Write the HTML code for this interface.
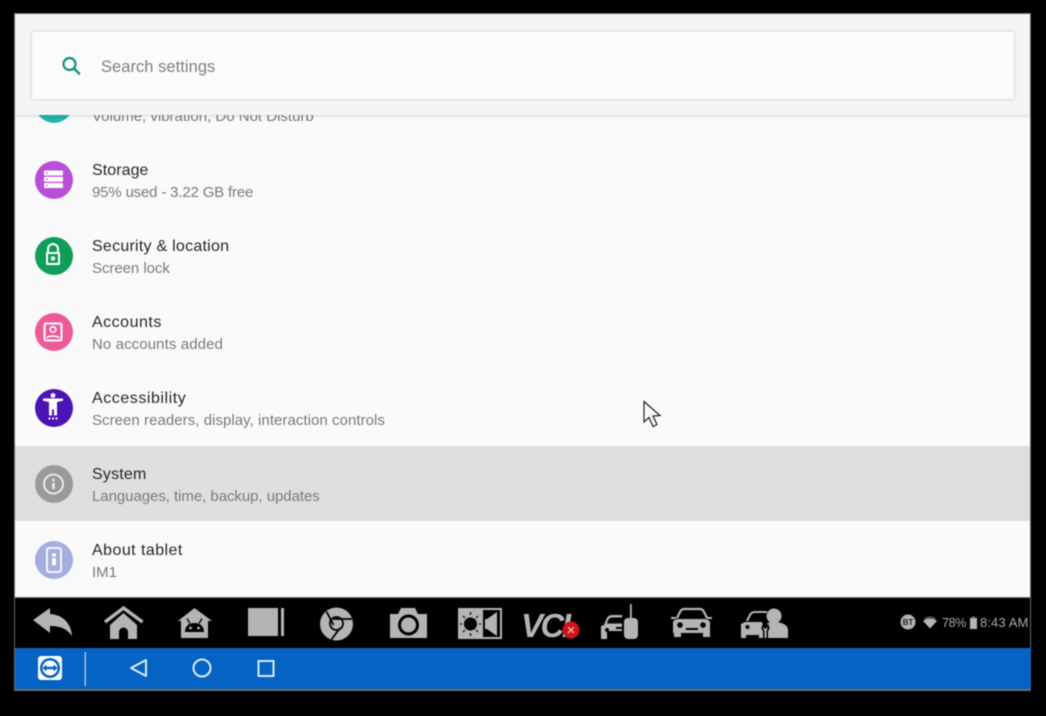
<!DOCTYPE html>
<html><head><meta charset="utf-8">
<style>
html,body{margin:0;padding:0;background:#000;width:1046px;height:716px;overflow:hidden;font-family:"Liberation Sans",sans-serif}
#w{position:absolute;left:0;top:0;width:1046px;height:716px;background:#000;overflow:hidden;filter:blur(.45px)}
.a{position:absolute}
.t{position:absolute;left:92px;font-size:16px;line-height:20px;color:#262626;white-space:nowrap}
.s{position:absolute;left:92px;font-size:15px;line-height:18px;color:#7a7a7a;white-space:nowrap}
</style></head>
<body><div id="w">
<div class="a" style="left:14px;top:13px;width:1017px;height:678px;background:#6a6a6a"></div>
<div class="a" style="left:15px;top:14px;width:1015px;height:584px;background:#fafafa"></div>
<div class="a" style="left:15px;top:446px;width:1015px;height:75px;background:#dfdfdf"></div>

<svg class="a" style="left:0;top:0" width="1046" height="716" viewBox="0 0 1046 716">
<circle cx="54" cy="104" r="19" fill="#1fb5ac"/>
<circle cx="54" cy="180" r="19" fill="#b94fd8"/>
<g fill="#fff"><rect x="44" y="170.500" width="19" height="5" rx="1"/><rect x="44" y="176.800" width="19" height="5" rx="1"/><rect x="44" y="183" width="19" height="5" rx="1"/></g>
<g fill="#b94fd8"><rect x="46" y="172.500" width="2" height="1"/><rect x="46" y="178.800" width="2" height="1"/><rect x="46" y="185" width="2" height="1"/></g>
<circle cx="54" cy="256" r="19" fill="#109d58"/>
<path d="M48 252v-3a5 5 0 0 1 10 0v3" fill="none" stroke="#fff" stroke-width="2"/>
<rect x="46" y="252" width="14" height="13" rx="1" fill="#fff"/><rect x="48" y="254" width="10" height="9" fill="#109d58"/><rect x="51" y="256.500" width="4" height="4" rx="1" fill="#fff"/>
<circle cx="54" cy="332" r="19" fill="#ee5a97"/>
<rect x="44.500" y="323.500" width="17" height="17" rx="1.500" fill="none" stroke="#fff" stroke-width="2"/>
<circle cx="53" cy="329.500" r="2.800" fill="none" stroke="#fff" stroke-width="1.600"/>
<path d="M46.500 338c2-2.500 11-2.500 13 0" fill="none" stroke="#fff" stroke-width="1.600"/>
<circle cx="54" cy="408" r="19" fill="#4a14b4"/>
<circle cx="53" cy="395.500" r="2.400" fill="#fff"/>
<path d="M43 398.500h20v2.200l-6 1.300v13.500h-3v-6h-2v6h-3v-13.500l-6-1.300z" fill="#fff"/>
<g fill="#fff"><circle cx="49.500" cy="418.500" r="1.100"/><circle cx="53" cy="418.500" r="1.100"/><circle cx="56.500" cy="418.500" r="1.100"/></g>
<circle cx="54" cy="484" r="19" fill="#9a9a9a"/>
<circle cx="53.500" cy="484" r="9.500" fill="none" stroke="#f2f2f2" stroke-width="1.800"/>
<rect x="52.300" y="483" width="2.400" height="6" fill="#f2f2f2"/><rect x="52.300" y="478.800" width="2.400" height="2.400" fill="#f2f2f2"/>
<circle cx="54" cy="560" r="19" fill="#a4addf"/>
<rect x="47" y="548" width="14" height="24" rx="2" fill="none" stroke="#fff" stroke-width="1.800"/>
<rect x="52" y="558" width="4" height="7.500" fill="#fff"/><rect x="52" y="553.500" width="4" height="3" fill="#fff"/>
</svg>

<div class="s" style="top:108px">Volume, vibration, Do Not Disturb</div>
<div class="t" style="top:161px;letter-spacing:.07px">Storage</div>
<div class="s" style="top:184px;letter-spacing:-.17px">95% used - 3.22 GB free</div>
<div class="t" style="top:237px;letter-spacing:.25px">Security &amp; location</div>
<div class="s" style="top:260px;letter-spacing:-.05px">Screen lock</div>
<div class="t" style="top:313px;letter-spacing:.5px">Accounts</div>
<div class="s" style="top:336px;letter-spacing:.1px">No accounts added</div>
<div class="t" style="top:389px;letter-spacing:.55px">Accessibility</div>
<div class="s" style="top:412px;letter-spacing:.05px">Screen readers, display, interaction controls</div>
<div class="t" style="top:465px;letter-spacing:.2px">System</div>
<div class="s" style="top:488px;letter-spacing:-.05px">Languages, time, backup, updates</div>
<div class="t" style="top:541px;letter-spacing:.45px">About tablet</div>
<div class="s" style="top:564px">IM1</div>

<div class="a" style="left:15px;top:14px;width:1015px;height:101px;background:#f5f5f5;box-shadow:0 1px 3px rgba(0,0,0,.15)"></div>
<div class="a" style="left:32px;top:32px;width:982px;height:67px;background:#fbfbfb;box-shadow:0 0 3px rgba(0,0,0,.22)"></div>
<svg class="a" style="left:58px;top:53px" width="28" height="28" viewBox="0 0 28 28">
<circle cx="11.500" cy="11" r="6" fill="none" stroke="#0f8f80" stroke-width="2.200"/>
<path d="M15.800 15.300l6 6" stroke="#0f8f80" stroke-width="2.400"/>
</svg>
<div class="a" style="left:101px;top:57px;font-size:16.5px;line-height:20px;color:#808080;letter-spacing:.04px;white-space:nowrap">Search settings</div>

<div class="a" style="left:15px;top:597px;width:1015px;height:1px;background:#777"></div>
<div class="a" style="left:15px;top:598px;width:1015px;height:50px;background:#000"></div>
<div class="a" style="left:15px;top:648px;width:1016px;height:41px;background:#0563c4"></div>

<svg class="a" style="left:0;top:598px" width="1046" height="92" viewBox="0 598 1046 92">
<g fill="#b4b4b4">
<path d="M33 620l17-12v6c13 1 21 9 22 22-5-7-11-10-22-10v7z"/>
<path d="M110 625l13.500-12 13.500 12v14h-9v-7a4.500 4.500 0 0 0-9 0v7h-9z"/>
<path d="M178 621l16.500-13 17.500 13h-4v17h-27v-17z"/>
<rect x="248" y="608" width="30" height="28"/><rect x="281" y="608" width="3" height="28"/>
<circle cx="336.500" cy="624" r="16.500"/>
<path d="M390 614h8l3-6h14l3 6h9v24h-37z"/>
<rect x="458" y="608" width="44" height="31"/>
</g>
<path d="M105 622l18.500-14 19 14" fill="none" stroke="#b4b4b4" stroke-width="3.500"/>
<path d="M185 632c0-6 4-9 9.500-9s9.500 3 9.500 9z" fill="#000"/>
<path d="M187 618.500l3 5M202 618.500l-3 5" stroke="#000" stroke-width="1.300"/>
<g fill="#b4b4b4"><circle cx="190.500" cy="628" r="1.400"/><circle cx="198.500" cy="628" r="1.400"/></g>

<g fill="none" stroke="#000" stroke-width="1.800">
<path d="M326.500 611.500l7 13.500M333 619h19M340 628l-8.500 11.500"/>
<circle cx="336.500" cy="623.500" r="6.500"/>
</g>
<circle cx="408.500" cy="625" r="9" fill="none" stroke="#000" stroke-width="3"/>

<rect x="483" y="610" width="17" height="27" fill="#000"/>
<path d="M485 619h2l10-7v24l-10-7h-2z" fill="#b4b4b4"/>
<circle cx="470.500" cy="624" r="6.500" fill="#000"/>
<g stroke="#000" stroke-width="1.200"><path d="M470.500 612v3M470.500 633v3M460 624h2M479 624h2M463 616l2 2M476 630l2 2M463 632l2-2M476 618l2-2"/></g>

<text x="521" y="637" font-family="Liberation Sans" font-weight="700" font-style="italic" font-size="33" fill="#b4b4b4" letter-spacing="-2.500">VCI</text>
<circle cx="571" cy="630" r="8.500" fill="#d11218"/>
<path d="M568 627l6 6M574 627l-6 6" stroke="#f4c7c7" stroke-width="1.200"/>

<g fill="#b4b4b4">
<path d="M601 626l3-1 2-5c1-3 3-5 6-5h10v2.500h-10c-2 0-3 1-4 3l-1 3h15v3.500h-6v2h6v2h-15v8h-6z"/>
<rect x="624" y="618" width="14" height="21" rx="4"/>
<rect x="630" y="604" width="1.800" height="15"/>
</g>
<circle cx="607" cy="630" r="2" fill="#000"/>

<path d="M677 618l3-6c1-2 2-3 4-3h16c2 0 3 1 4 3l3 6" fill="none" stroke="#b4b4b4" stroke-width="2.200"/>
<g fill="#b4b4b4">
<path d="M673 622c1-2 3-3 6-3h25c3 0 5 1 6 3v11h-37z"/>
<rect x="674" y="632" width="7" height="5"/><rect x="703" y="632" width="7" height="5"/>
<rect x="671" y="617" width="5" height="2"/><rect x="707" y="617" width="5" height="2"/>
</g>
<g fill="#000"><circle cx="680" cy="625" r="2.800"/><circle cx="703" cy="625" r="2.800"/><rect x="686" y="628" width="12" height="2"/></g>

<path d="M747 621l3-6c1-2 3-3 5-3h12" fill="none" stroke="#b4b4b4" stroke-width="2"/>
<path d="M741 624l4-2h17l1 3v13h-4v-3h-13v3h-5z" fill="#b4b4b4"/>
<circle cx="747.500" cy="627" r="2" fill="#000"/>
<circle cx="774" cy="616" r="7.500" fill="#b4b4b4"/>
<path d="M764 638v-9c0-5 4-7 10-7s14 2 14 8v8z" fill="#b4b4b4"/>
<path d="M763 624c-2 3-2 5 0 7v8h5v-8c2-2 2-4 0-7z" fill="#000"/>
<path d="M764 626c-1 2-1 3 .5 4.500v7.500h2v-7.500c1.500-1.500 1.500-2.500.5-4.500v2.500h-3z" fill="#b4b4b4"/>

<circle cx="908" cy="622" r="7.500" fill="#b4b4b4"/>
<text x="908" y="625" font-family="Liberation Sans" font-weight="700" font-size="8" fill="#222" text-anchor="middle">BT</text>
<path d="M923 621c4-3.500 10-3.500 14 0l-7 7.500z" fill="#b4b4b4"/>
<path d="M924.500 619c3.500-2.500 8-2.500 11 0" fill="none" stroke="#666" stroke-width="1.200"/>
<text x="942" y="627" font-family="Liberation Sans" font-size="12.500" fill="#a8a8a8" letter-spacing="-.3">78%</text>
<rect x="970" y="618" width="7" height="11" fill="#b4b4b4"/><rect x="972" y="616.500" width="3" height="2" fill="#777"/>
<text x="980" y="627" font-family="Liberation Sans" font-size="13" fill="#a8a8a8" letter-spacing=".1">8:43 AM</text>

<rect x="38" y="656" width="24" height="24" rx="3" fill="#fff"/>
<circle cx="50" cy="668" r="10" fill="#0563c4"/>
<circle cx="50" cy="668" r="7.500" fill="#fff"/>
<path d="M42.500 668l4-3.500v2.300h7v-2.300l4 3.500-4 3.500v-2.300h-7v2.300z" fill="#0563c4"/>
<rect x="84.500" y="652" width="1.500" height="34" fill="#9cc3ec"/>
<path d="M146 660v16l-15-8z" fill="none" stroke="#dcebfa" stroke-width="2" stroke-linejoin="round"/>
<circle cx="202" cy="668" r="8.500" fill="none" stroke="#dcebfa" stroke-width="2"/>
<rect x="258.500" y="661" width="15" height="15" fill="none" stroke="#dcebfa" stroke-width="2"/>
</svg>

<svg class="a" style="left:640px;top:398px" width="26" height="36" viewBox="0 0 26 36">
<path d="M4 3.500V24l5-4.500 4 9 4-2-4-8.500 7-.5z" fill="#fafafa" stroke="#222" stroke-width="1.200" stroke-linejoin="miter"/>
</svg>
</div></body></html>
